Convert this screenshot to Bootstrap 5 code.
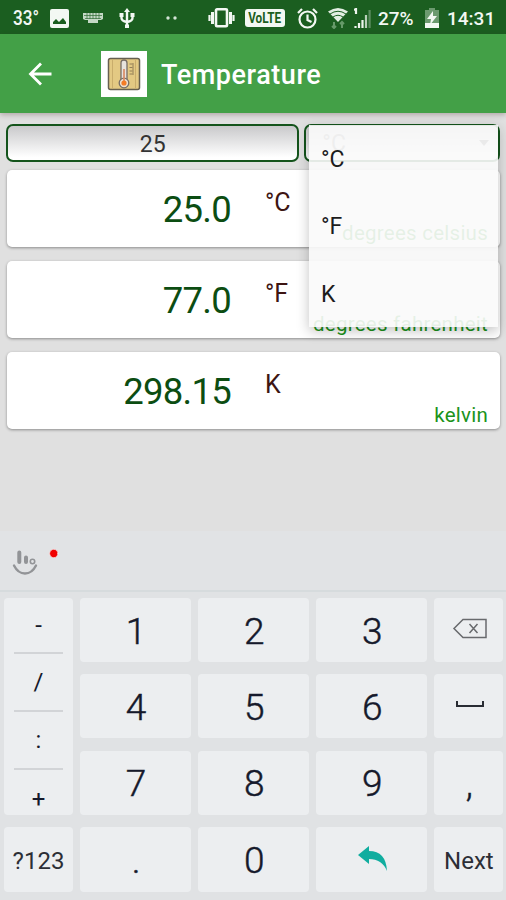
<!DOCTYPE html>
<html lang="en">
<head>
<meta charset="utf-8">
<meta name="viewport" content="width=device-width, initial-scale=1">
<title>Temperature</title>
<link href="https://cdn.jsdelivr.net/npm/bootstrap@5.3.0/dist/css/bootstrap.min.css" rel="stylesheet">
<style>
body{font-family:Roboto,"Liberation Sans",sans-serif;background:#e0e0e0;height:900px;overflow:hidden;line-height:1}
svg{display:block;flex:none}
.status{height:34px;background:#1b5e20;color:#f3f8f3;font-weight:500;font-size:19px;padding:2px 0 0 13px}
.status>*{flex:none}
.status .deg{width:37px;font-size:20px;transform:scaleX(.86);transform-origin:0 50%}
.ic-keyboard{margin-left:14px}
.ic-usb{margin-left:16px}
.ic-dots{margin-left:31px}
.ic-vibrate{margin-left:31px}
.ic-alarm{margin-left:12px}
.ic-wifi{margin-left:10px}
.ic-signal{margin-left:6px}
.percent{margin-left:7px;width:39px}
.ic-battery{margin-left:8px}
.clock{margin-left:8px}
.volte{width:40px;height:18px;background:#f3f8f3;color:#1b5e20;border-radius:3px;font-size:14px;font-weight:700;margin-left:10px}
.volte span{transform:scaleX(.84)}
.appbar{height:79px;background:#43a047;box-shadow:0 2px 5px rgba(60,30,30,.28);padding-left:28px;padding-top:1px}
.appicon{width:46px;height:46px;background:#fff;margin-left:49px}
.appbar h1{font-size:27px;font-weight:500;margin:0 0 0 14px;padding-top:2px;letter-spacing:.55px}
.content-area{height:418px;padding:11px 6px 0}
.fieldbox{height:38px;border:2px solid #14541c;border-radius:7px;background:linear-gradient(#c9c9cb,#fff 92%)}
.value-field{width:294px;font-size:23px;color:#333;padding-top:3px}
.unit-field{width:196px;margin-left:5px;font-size:23px;color:#777}
.result{height:77px;background:#fff;border-radius:5px;box-shadow:0 1px 3px rgba(0,0,0,.38);margin:0 0 14px 1px}
.result .num{width:224px;flex:none;font-size:36.5px;letter-spacing:-.75px;color:#0c4d12;padding-top:22px}
.result .unit{width:28px;flex:none;margin-left:34px;font-size:25px;color:#3d1512;padding-top:20px}
.result .fullname{font-size:20.5px;white-space:nowrap;color:#1b931b;padding:0 12px 4px 0;letter-spacing:.25px}
.unit-menu{position:absolute;left:309px;top:125px;width:189px;height:202px;background:rgba(250,250,250,.91);box-shadow:0 4px 12px rgba(0,0,0,.24);padding:1px 0 0 12px;font-size:23px;color:#1c1c1c}
.unit-menu div{height:67.3px}
.suggest{height:61px;background:#e1e3e5;border-bottom:2px solid #d6dbdd;padding:18px 0 0 12px}
.keyboard{background:#e0e2e4;height:308px;display:grid;grid-template-columns:69px 111px 111px 111px 69px;grid-template-rows:64px 64px 64px 65px;gap:12.4px 7.1px;padding:6px 3px 8px 4px;color:#15192b}
.keycap{background:#eceef0;border-radius:4px;font-size:37px;padding-top:2px}
.iconkey{padding:0 0 2px 2px}
.symbols{grid-row:1/4;font-size:24px;padding:0 10px}
.symbols div{height:58px;border-bottom:2px solid #d2d4d7}
.symbols div:last-child{border:0}
.symbols div:first-child{height:56px}
.smallkey{font-size:24px;color:#2c2e36}
.digit{font-weight:300;-webkit-text-stroke:.45px;padding-left:1px}
</style>
</head>
<body>
<header>
<div class="status d-flex align-items-center">
 <span class="deg">33°</span>
 <svg width="19" height="19" viewBox="0 0 19 19"><rect width="19" height="19" rx="2" fill="#f3f8f3"/><path d="M3 15v-2l3-3 3 3 4-4 3 4v2z" fill="#1b5e20"/></svg>
 <svg class="ic-keyboard" width="20" height="12" viewBox="0 0 20 12"><path d="M0 1h20v6l-2 1h-3v3H5V8H2L0 7z" fill="#c4d8c5"/><path d="M1 3.500h18M2 6.500h16M4 1v6M7 1v6M10 1v6M13 1v6M16 1v6" stroke="#2f6b34" stroke-width=".7"/></svg>
 <svg class="ic-usb" width="16" height="21" viewBox="0 0 16 21" fill="none" stroke="#f3f8f3" stroke-width="2.400"><path d="M8 3v15M2.500 6v4q0 3 5.500 4q5.500-1 5.500-4V6"/><path d="M8 0l3 4H5zM.5 5h4v4h-4zM11.500 5h4v4h-4zM6 16.500h4V20H6z" fill="#f3f8f3" stroke="none"/></svg>
 <svg class="ic-dots" width="11" height="4" viewBox="0 0 11 4" fill="#d5e4d6"><circle cx="2" cy="2" r="1.700"/><circle cx="9" cy="2" r="1.700"/></svg>
 <svg class="ic-vibrate" width="27" height="20" viewBox="0 0 27 20" fill="none" stroke="#f3f8f3"><rect x="8" y="1.300" width="11" height="17" rx="1" stroke-width="2.600"/><path d="M4.500 4v12M22.500 4v12" stroke-width="3"/><path d="M1.500 7v6M25.500 7v6" stroke-width="2.200"/></svg>
 <div class="volte d-flex align-items-center justify-content-center"><span>VoLTE</span></div>
 <svg class="ic-alarm" width="21" height="21" viewBox="0 0 21 21" fill="none" stroke="#f3f8f3" stroke-width="2.200"><circle cx="10.500" cy="11.500" r="8"/><path d="M10.500 6.500v5.500l4 2M1 5l4-4M20 5l-4-4"/></svg>
 <svg class="ic-wifi" width="20" height="21" viewBox="0 0 20 21"><path d="M0 3.500Q10-3.500 20 3.500L10 14z" fill="#e3eee3"/><path d="M2 6q8-5.500 16 0M5 9q5-3.500 10 0" fill="none" stroke="#1b5e20"/><path d="M6 14v6M4 18l2 2 2-2M14 20v-6M12 16l2-2 2 2" fill="none" stroke="#669a69" stroke-width="2"/></svg>
 <svg class="ic-signal" width="17" height="21" viewBox="0 0 17 21" fill="none" stroke="#eef5ee" stroke-width="2.200"><path d="M0 2l2-1v5M1.500 18v2M5 15v5M8.500 12v8"/><path d="M12 7v13" stroke="#b9d0ba"/><path d="M15.600 2v18" stroke="#5c8d60"/></svg>
 <span class="percent">27%</span>
 <svg class="ic-battery" width="14" height="20" viewBox="0 0 14 20"><path d="M4 0h6v2h4v18H0V2h4z" fill="#6c9a6f"/><path d="M0 15h14v5H0z" fill="#f3f8f3"/><path d="M8 3L2 11h4l-1 6 7-9H8z" fill="#f3f8f3"/></svg>
 <span class="clock">14:31</span>
</div>
<div class="appbar d-flex align-items-center text-white position-relative">
 <svg width="24" height="24" viewBox="0 0 24 24" fill="none" stroke="#fff" stroke-width="2.800"><path d="M23.500 12H2.500M13 1.500L2.500 12 13 22.500"/></svg>
 <div class="appicon d-flex align-items-center justify-content-center"><svg width="34" height="34" viewBox="0 0 34 34"><rect x="1.500" y="1.500" width="31" height="31" rx="2" fill="#e3c983" stroke="#665f50" stroke-width="1.500"/><path d="M5.500 2v30M28.500 2v30" stroke="#c9ad6c"/><path d="M14 23V6q0-3 3-3t3 3v17" fill="#e8e3dd" stroke="#776d65" stroke-width="1.300"/><circle cx="17" cy="26" r="4.800" fill="#eee0cf" stroke="#776d65" stroke-width="1.300"/><path d="M17 12v12" stroke="#d88b65" stroke-width="1.700"/><circle cx="17" cy="26" r="2.600" fill="#f47c26"/><path d="M22.500 7h3M22.500 10.500h3M22.500 14h3M22.500 17h3M26 6v12" stroke="#927e57"/></svg></div>
 <h1>Temperature</h1>
</div>
</header>
<main class="content-area">
 <div class="d-flex mb-2">
  <div class="fieldbox value-field d-flex align-items-center justify-content-center">25</div>
  <div class="fieldbox unit-field d-flex align-items-center justify-content-between ps-3 pe-2"><span>°C</span><svg width="12" height="6"><path d="M1 0h10L6 6z" fill="#555"/></svg></div>
 </div>
 <section class="result d-flex"><div class="num text-end">25.0</div><div class="unit">°C</div><div class="fullname ms-auto align-self-end">degrees celsius</div></section>
 <section class="result d-flex"><div class="num text-end">77.0</div><div class="unit">°F</div><div class="fullname ms-auto align-self-end">degrees fahrenheit</div></section>
 <section class="result d-flex"><div class="num text-end">298.15</div><div class="unit">K</div><div class="fullname ms-auto align-self-end">kelvin</div></section>
</main>
<div class="unit-menu"><div class="d-flex align-items-center">°C</div><div class="d-flex align-items-center">°F</div><div class="d-flex align-items-center">K</div></div>
<footer>
 <div class="suggest d-flex align-items-start">
  <svg width="50" height="28" viewBox="0 0 50 28" fill="none" stroke="#929497" stroke-linecap="round"><path d="M7.300 3.500v9.500M14 8.500v4.500" stroke-width="4"/><circle cx="20.500" cy="12.500" r="2.200" stroke-width="1.600"/><path d="M2 16.500q4 8 11 8t11-8" stroke-width="2.400"/><circle cx="41.800" cy="4.500" r="4.200" fill="#f00000" stroke="#f8eeee" stroke-width=".7"/></svg>
 </div>
 <div class="keyboard">
  <div class="keycap symbols"><div class="d-flex align-items-center justify-content-center">-</div><div class="d-flex align-items-center justify-content-center">/</div><div class="d-flex align-items-center justify-content-center">:</div><div class="d-flex align-items-center justify-content-center">+</div></div>
  <div class="keycap digit d-flex align-items-center justify-content-center">1</div><div class="keycap digit d-flex align-items-center justify-content-center">2</div><div class="keycap digit d-flex align-items-center justify-content-center">3</div>
  <div class="keycap iconkey d-flex align-items-center justify-content-center"><svg width="36" height="22" viewBox="0 0 36 22" fill="none" stroke="#686a6d" stroke-width="1.500"><path d="M11 1.500h23v18H11L2 10.500zM17.500 6l8 9M25.500 6l-8 9"/></svg></div>
  <div class="keycap digit d-flex align-items-center justify-content-center">4</div><div class="keycap digit d-flex align-items-center justify-content-center">5</div><div class="keycap digit d-flex align-items-center justify-content-center">6</div>
  <div class="keycap iconkey d-flex align-items-center justify-content-center"><svg width="30" height="8" viewBox="0 0 30 8" fill="none" stroke="#292c33" stroke-width="2"><path d="M2 0v5h26V0"/></svg></div>
  <div class="keycap digit d-flex align-items-center justify-content-center">7</div><div class="keycap digit d-flex align-items-center justify-content-center">8</div><div class="keycap digit d-flex align-items-center justify-content-center">9</div><div class="keycap digit d-flex align-items-center justify-content-center">,</div>
  <div class="keycap smallkey d-flex align-items-center justify-content-center">?123</div><div class="keycap digit d-flex align-items-center justify-content-center">.</div><div class="keycap digit d-flex align-items-center justify-content-center">0</div>
  <div class="keycap iconkey d-flex align-items-center justify-content-center"><svg width="32" height="28" viewBox="0 0 32 28"><path d="M1 10L12 1v5q17 0 18 20Q25 14 12 14v5z" fill="#10ad9f"/></svg></div>
  <div class="keycap smallkey d-flex align-items-center justify-content-center">Next</div>
 </div>
</footer>
<script src="https://cdn.jsdelivr.net/npm/bootstrap@5.3.0/dist/js/bootstrap.bundle.min.js"></script>
</body>
</html>
